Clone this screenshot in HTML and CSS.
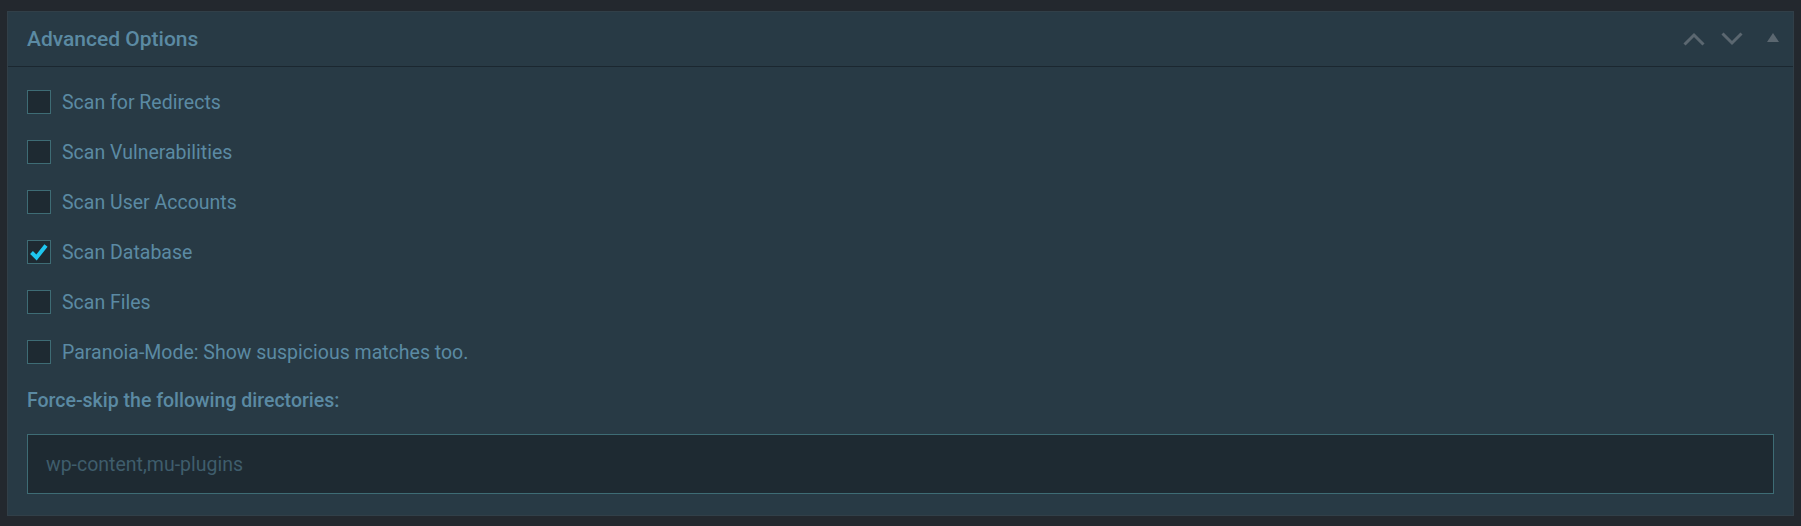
FILE: index.html
```html
<!DOCTYPE html>
<html>
<head>
<meta charset="utf-8">
<link rel="stylesheet" href="styles.css">
</head>
<body>
<div class="panel">
  <div class="panel-header">
    <h2 class="panel-title">Advanced Options</h2>
    <div class="header-actions">
      <button class="icon-btn" aria-label="Move up">
        <svg width="22" height="14" viewBox="0 0 22 14"><path d="M1.5 12.5 L11 3 L20.5 12.5" fill="none" stroke="#5b6770" stroke-width="3"/></svg>
      </button>
      <button class="icon-btn" aria-label="Move down">
        <svg width="22" height="14" viewBox="0 0 22 14"><path d="M1.5 1.5 L11 11 L20.5 1.5" fill="none" stroke="#5b6770" stroke-width="3"/></svg>
      </button>
      <button class="icon-btn tri" aria-label="Toggle">
        <svg width="12" height="9" viewBox="0 0 12 9"><path d="M6 0 L12 9 L0 9 Z" fill="#5b6770"/></svg>
      </button>
    </div>
  </div>
  <div class="panel-body">
    <label class="opt"><span class="cb"></span><span class="opt-text">Scan for Redirects</span></label>
    <label class="opt"><span class="cb"></span><span class="opt-text">Scan Vulnerabilities</span></label>
    <label class="opt"><span class="cb"></span><span class="opt-text">Scan User Accounts</span></label>
    <label class="opt"><span class="cb checked"><svg width="20" height="18" viewBox="0 0 20 18"><path d="M2.5 9.5 L7.5 14.5 L17 2.5" fill="none" stroke="#1fc6ef" stroke-width="4"/></svg></span><span class="opt-text">Scan Database</span></label>
    <label class="opt"><span class="cb"></span><span class="opt-text">Scan Files</span></label>
    <label class="opt"><span class="cb"></span><span class="opt-text">Paranoia-Mode: Show suspicious matches too.</span></label>
    <div class="field-label">Force-skip the following directories:</div>
    <div class="text-input"><span class="placeholder">wp-content,mu-plugins</span></div>
  </div>
</div>
</body>
</html>
```
FILE: styles.css
```css
html, body {
  margin: 0;
  padding: 0;
  background: #23282e;
}
body {
  padding: 11px 7px 10px 7px;
  font-family: Roboto, "Liberation Sans", sans-serif;
}
.panel {
  background: #283a45;
  border: 1px solid #313f48;
  height: 503px;
  display: flex;
  flex-direction: column;
}
.panel-header {
  height: 54px;
  border-bottom: 1px solid #1b2730;
  display: flex;
  align-items: center;
  justify-content: space-between;
  padding: 0 14px 0 19px;
}
.panel-title {
  margin: 0;
  font-size: 21px;
  font-weight: 500;
  color: #5b8aa3;
}
.header-actions {
  display: flex;
  align-items: center;
}
.icon-btn {
  background: none;
  border: 0;
  padding: 0;
  margin: 0 0 0 16px;
  display: flex;
  align-items: center;
  height: 20px;
}
.icon-btn.tri {
  margin-left: 24px;
  margin-top: -4px;
}
.panel-body {
  padding: 10px 19px 0 19px;
  display: flex;
  flex-direction: column;
}
.opt {
  height: 50px;
  display: flex;
  align-items: center;
  gap: 11px;
}
.cb {
  width: 22px;
  height: 22px;
  background: #1e2a32;
  border: 1px solid #3e6c75;
  display: flex;
  align-items: center;
  justify-content: center;
}
.opt-text {
  font-size: 19.5px;
  color: #5b8aa3;
}
.field-label {
  margin-top: 12px;
  font-size: 19.5px;
  font-weight: 500;
  color: #5b8aa3;
  line-height: 24px;
}
.text-input {
  margin-top: 21px;
  height: 58px;
  background: #1e2a32;
  border: 1px solid #3e6c75;
  display: flex;
  align-items: center;
  padding: 0 18px;
}
.placeholder {
  font-size: 19.5px;
  color: #3f5d6c;
}
```
